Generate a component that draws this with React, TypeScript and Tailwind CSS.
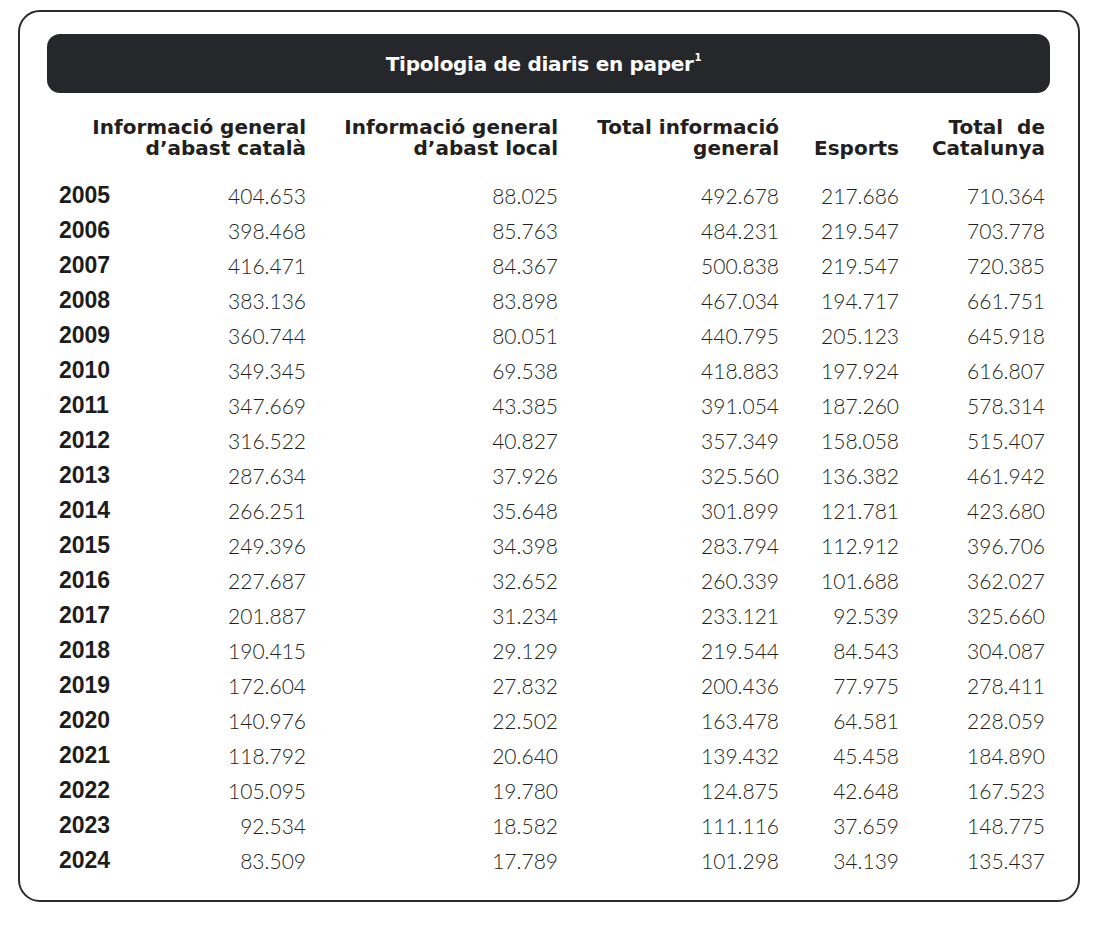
import React from "react";

const rows: [string, string, string, string, string, string][] = [
  ["2005", "404.653", "88.025", "492.678", "217.686", "710.364"],
  ["2006", "398.468", "85.763", "484.231", "219.547", "703.778"],
  ["2007", "416.471", "84.367", "500.838", "219.547", "720.385"],
  ["2008", "383.136", "83.898", "467.034", "194.717", "661.751"],
  ["2009", "360.744", "80.051", "440.795", "205.123", "645.918"],
  ["2010", "349.345", "69.538", "418.883", "197.924", "616.807"],
  ["2011", "347.669", "43.385", "391.054", "187.260", "578.314"],
  ["2012", "316.522", "40.827", "357.349", "158.058", "515.407"],
  ["2013", "287.634", "37.926", "325.560", "136.382", "461.942"],
  ["2014", "266.251", "35.648", "301.899", "121.781", "423.680"],
  ["2015", "249.396", "34.398", "283.794", "112.912", "396.706"],
  ["2016", "227.687", "32.652", "260.339", "101.688", "362.027"],
  ["2017", "201.887", "31.234", "233.121", "92.539", "325.660"],
  ["2018", "190.415", "29.129", "219.544", "84.543", "304.087"],
  ["2019", "172.604", "27.832", "200.436", "77.975", "278.411"],
  ["2020", "140.976", "22.502", "163.478", "64.581", "228.059"],
  ["2021", "118.792", "20.640", "139.432", "45.458", "184.890"],
  ["2022", "105.095", "19.780", "124.875", "42.648", "167.523"],
  ["2023", "92.534", "18.582", "111.116", "37.659", "148.775"],
  ["2024", "83.509", "17.789", "101.298", "34.139", "135.437"],
];

const grid = "grid grid-cols-[100px_147px_252px_221px_120px_146px]";

export default function App() {
  return (
    <div className="w-[1100px] h-[931px] bg-white pt-[10px] pl-[18px]">
      <div className="w-[1062px] h-[892px] border-2 border-[#2b2b2b] rounded-[22px] pt-[22px] pl-[27px]">
        <div className="w-[1003px] h-[59px] bg-[#26272b] rounded-[13px] flex items-center justify-center pr-[10px]">
          <span className="text-white text-[20px] font-bold [font-family:'DejaVu_Sans',sans-serif] tracking-[-0.3px]">
            Tipologia de diaris en paper
            <span className="text-[10px] align-top relative top-[1px] ml-[1px]">1</span>
          </span>
        </div>
        <div className="pl-[12px] text-[#231f20]">
          <div className={`${grid} mt-[22px] h-[44px] items-end text-[20px] leading-[21px] font-bold text-right [font-family:'DejaVu_Sans',sans-serif]`}>
            <div className="col-span-2">
              Informació general
              <br />
              d’abast català
            </div>
            <div>
              Informació general
              <br />
              d’abast local
            </div>
            <div>
              Total informació
              <br />
              general
            </div>
            <div>Esports</div>
            <div>
              Total&nbsp; de
              <br />
              Catalunya
            </div>
          </div>
          <div className="mt-[19px]">
            {rows.map((r) => (
              <div key={r[0]} className={`${grid} h-[35px] items-center`}>
                <div className="text-[23px] font-bold [font-family:'Liberation_Sans',Arial,sans-serif] text-[#1d1d1d]">{r[0]}</div>
                {r.slice(1).map((v, i) => (
                  <div
                    key={i}
                    className="text-right text-[21px] font-light [font-family:Lato,'Open_Sans',sans-serif]"
                  >
                    {v}
                  </div>
                ))}
              </div>
            ))}
          </div>
        </div>
      </div>
    </div>
  );
}
